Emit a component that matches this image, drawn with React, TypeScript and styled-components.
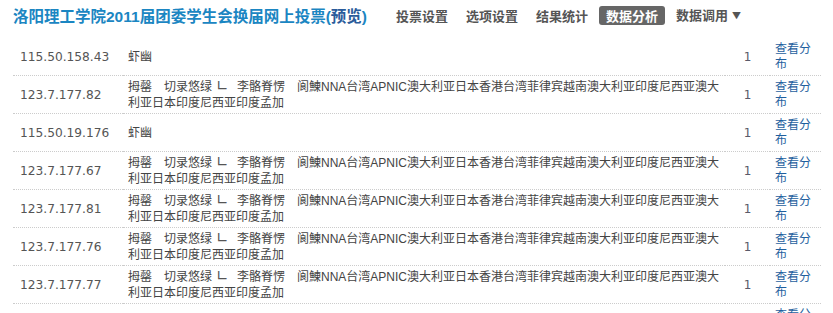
import React from 'react';
import styled, { createGlobalStyle } from 'styled-components';

const GlobalStyle = createGlobalStyle`
  html, body {
    margin: 0;
    padding: 0;
    background: #fff;
  }
  body {
    font-family: "Liberation Sans", "Noto Sans CJK SC", sans-serif;
    font-size: 12px;
    color: #444;
  }
`;

const Page = styled.div`
  padding: 0 12px 0 13px;
`;

const Header = styled.div`
  display: flex;
  align-items: center;
  height: 30px;
  padding-bottom: 8px;
`;

const Title = styled.h1`
  margin: 0;
  font-size: 15.5px;
  font-weight: bold;
  color: #1b86c2;
  font-family: "Liberation Sans", "Noto Sans CJK SC", sans-serif;
  white-space: nowrap;
`;

const Preview = styled.span`
  color: #2a5b9a;
`;

const Nav = styled.ul`
  display: flex;
  align-items: center;
  gap: 4px;
  list-style: none;
  margin: 0 0 0 22px;
  padding: 0;
`;

const NavItem = styled.li<{ $active?: boolean }>`
  font-family: "Noto Sans CJK SC", sans-serif;
  font-size: 13px;
  font-weight: bold;
  line-height: 19px;
  padding: 0 7px;
  border-radius: 3px;
  color: ${({ $active }) => ($active ? '#fff' : '#555')};
  background: ${({ $active }) => ($active ? '#666' : 'transparent')};
  white-space: nowrap;
`;

const Caret = styled.span`
  font-size: 9px;
  margin-left: 4px;
  vertical-align: 1px;
`;

const Table = styled.table`
  width: 808px;
  border-collapse: collapse;
  table-layout: fixed;
`;

const Row = styled.tr`
  border-bottom: 1px dotted #ccc;
`;

const Cell = styled.td`
  height: 32px;
  padding: 3px 5px 2px;
  vertical-align: middle;
  line-height: 16px;
  overflow: hidden;
`;

const IpCell = styled(Cell)`
  width: 98px;
  padding-left: 7px;
  font-family: "DejaVu Sans", sans-serif;
  font-size: 12.2px;
  color: #555;
`;

const OptionCell = styled(Cell)`
  width: 592px;
  color: #444;
`;

const Mark = styled.span`
  display: inline-block;
  box-sizing: border-box;
  width: 13px;
  height: 16px;
  padding-left: 4px;
  font-family: "DejaVu Sans", sans-serif;
  font-size: 15px;
  line-height: 15px;
  vertical-align: top;
  color: #555;
`;

const CountCell = styled(Cell)`
  width: 35px;
  text-align: center;
  font-family: "DejaVu Sans", sans-serif;
  color: #5a5a6a;
`;

const LinkCell = styled(Cell)`
  width: 41px;
  line-height: 15px;
`;

const Link = styled.a`
  color: #1f5f9e;
  text-decoration: none;
`;

const LongOption = () => (
  <>
    拇罄　切录悠绿<Mark>∟</Mark>　李骼脊愣　阆鯟NNA台湾APNIC澳大利亚日本香港台湾菲律宾越南澳大利亚印度尼西亚澳大利亚日本印度尼西亚印度孟加
  </>
);

const rows = [
  { ip: '115.50.158.43', long: false },
  { ip: '123.7.177.82', long: true },
  { ip: '115.50.19.176', long: false },
  { ip: '123.7.177.67', long: true },
  { ip: '123.7.177.81', long: true },
  { ip: '123.7.177.76', long: true },
  { ip: '123.7.177.77', long: true },
  { ip: '115.50.19.180', long: false },
];

const tabs = ['投票设置', '选项设置', '结果统计', '数据分析'];

export default function App() {
  return (
    <Page>
      <GlobalStyle />
      <Header>
        <Title>
          洛阳理工学院2011届团委学生会换届网上投票(<Preview>预览</Preview>)
        </Title>
        <Nav>
          {tabs.map((t) => (
            <NavItem key={t} $active={t === '数据分析'}>
              {t}
            </NavItem>
          ))}
          <NavItem>
            数据调用<Caret>▼</Caret>
          </NavItem>
        </Nav>
      </Header>
      <Table>
        <tbody>
          {rows.map((r, i) => (
            <Row key={i}>
              <IpCell>{r.ip}</IpCell>
              <OptionCell>{r.long ? <LongOption /> : '虾幽'}</OptionCell>
              <CountCell>1</CountCell>
              <LinkCell>
                <Link href="#">查看分布</Link>
              </LinkCell>
            </Row>
          ))}
        </tbody>
      </Table>
    </Page>
  );
}
